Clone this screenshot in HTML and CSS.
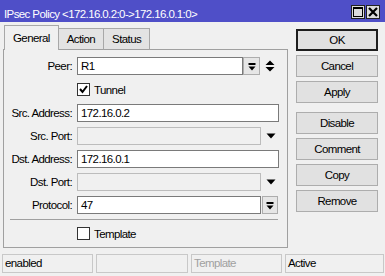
FILE: index.html
```html
<!DOCTYPE html>

<html lang="en">
  <head>
    <meta charset="utf-8">
    <meta name="viewport" content="width=device-width, initial-scale=1.0">

    <title>IPsec Policy</title>

    <link rel="stylesheet" href="styles.css">
  </head>
  <body>
    <div class="window">
      <div class="titlebar">
        <span class="title">IPsec Policy &lt;172.16.0.2:0-&gt;172.16.0.1:0&gt;</span>
        <div class="title-buttons">
          <span class="tb-btn">
            <svg width="12" height="12" viewBox="0 0 12 12"><rect x="1.5" y="1.5" width="9" height="9" fill="none" stroke="#000" stroke-width="1"/><rect x="1" y="1" width="10" height="2" fill="#000"/></svg>
          </span>
          <span class="tb-btn">
            <svg width="12" height="12" viewBox="0 0 12 12"><path d="M2 2 L10 10 M10 2 L2 10" stroke="#000" stroke-width="2.2"/></svg>
          </span>
        </div>
      </div>

      <div class="main">
        <div class="left">
          <div class="tabs">
            <span class="tab-edge"></span>
            <span class="tab active">General</span>
            <span class="tab">Action</span>
            <span class="tab">Status</span>
            <span class="tab-fill"></span>
          </div>

          <div class="panel">
            <div class="row">
              <span class="label">Peer:</span>
              <span class="field peer">R1</span>
              <span class="drop-btn">
                <svg width="16" height="17" viewBox="0 0 16 17"><rect x="4.5" y="5" width="7" height="2" fill="#000"/><path d="M4.5 8.5 H11.5 L8 12.5 Z" fill="#000"/></svg>
              </span>
              <svg class="updown" width="10" height="12" viewBox="0 0 10 12"><path d="M5 0.5 L9.5 5 H0.5 Z M0.5 7 H9.5 L5 11.5 Z" fill="#000"/></svg>
            </div>

            <div class="row check-row">
              <span class="checkbox">
                <svg width="11" height="11" viewBox="0 0 11 11"><path d="M2 5 L4.5 8 L9 2" fill="none" stroke="#000" stroke-width="2"/></svg>
              </span>
              <span class="check-label">Tunnel</span>
            </div>

            <div class="row">
              <span class="label">Src. Address:</span>
              <span class="field wide">172.16.0.2</span>
            </div>

            <div class="row">
              <span class="label">Src. Port:</span>
              <span class="field mid disabled"></span>
              <svg class="arrow" width="10" height="6" viewBox="0 0 10 6"><path d="M0.5 0.5 H9.5 L5 5.5 Z" fill="#000"/></svg>
            </div>

            <div class="row">
              <span class="label">Dst. Address:</span>
              <span class="field wide">172.16.0.1</span>
            </div>

            <div class="row">
              <span class="label">Dst. Port:</span>
              <span class="field mid disabled"></span>
              <svg class="arrow" width="10" height="6" viewBox="0 0 10 6"><path d="M0.5 0.5 H9.5 L5 5.5 Z" fill="#000"/></svg>
            </div>

            <div class="row">
              <span class="label">Protocol:</span>
              <span class="field mid">47</span>
              <span class="drop-btn proto">
                <svg width="16" height="17" viewBox="0 0 16 17"><rect x="4.5" y="5" width="7" height="2" fill="#000"/><path d="M4.5 8.5 H11.5 L8 12.5 Z" fill="#000"/></svg>
              </span>
            </div>

            <div class="separator"></div>

            <div class="row check-row last">
              <span class="checkbox"></span>
              <span class="check-label">Template</span>
            </div>
          </div>
        </div>

        <div class="buttons">
          <div class="btn default">OK</div>
          <div class="btn">Cancel</div>
          <div class="btn">Apply</div>
          <div class="btn spaced">Disable</div>
          <div class="btn">Comment</div>
          <div class="btn">Copy</div>
          <div class="btn">Remove</div>
        </div>
      </div>

      <div class="statusbar">
        <span class="status s1">enabled</span>
        <span class="status s2"></span>
        <span class="status s3 dim">Template</span>
        <span class="status s4">Active</span>
      </div>
    </div>
  </body>
</html>
```

FILE: styles.css
```css
* {
  box-sizing: border-box;
}

body {
  margin: 0;
  background-color: #f0f0f0;
  font-family: "Liberation Sans", Arial, sans-serif;
  font-size: 11.5px;
  letter-spacing: -0.6px;
  color: #000;
}

.window {
  width: 385px;
  height: 276px;
  display: flex;
  flex-direction: column;
}

/* title bar */
.titlebar {
  height: 22px;
  background-color: #4f4fc8;
  display: flex;
  justify-content: space-between;
  align-items: flex-start;
  padding: 0 5px 0 4px;
}
.title {
  color: #fff;
  margin-top: 7px;
  line-height: 14px;
  white-space: nowrap;
}
.title-buttons {
  display: flex;
  gap: 1px;
  margin-top: 5px;
}
.tb-btn {
  width: 14px;
  height: 14px;
  background-color: #dcdcdc;
  border: 1px solid #222;
  display: flex;
  align-items: center;
  justify-content: center;
}

/* main area */
.main {
  height: 232px;
  display: flex;
  padding: 3px 0 0 3px;
}
.left {
  width: 285px;
}

.tabs {
  display: flex;
  align-items: flex-end;
  height: 25px;
}
.tab-edge {
  width: 1px;
  height: 1px;
  border-bottom: 1px solid #a0a0a0;
}
.tab {
  height: 22px;
  padding: 0 8px;
  line-height: 21px;
  background-color: #e3e3e3;
  border-top: 1px solid #a8a8a8;
  border-right: 1px solid #a8a8a8;
  border-bottom: 1px solid #a0a0a0;
  white-space: nowrap;
}
.tab.active {
  height: 25px;
  line-height: 24px;
  background-color: #f0f0f0;
  border-left: 1px solid #a8a8a8;
  border-bottom: none;
}
.tab-fill {
  flex: 1;
  height: 1px;
  border-bottom: 1px solid #a0a0a0;
}

.panel {
  height: 198px;
  border: 1px solid #a0a0a0;
  border-top: none;
  padding-top: 7px;
}

.row {
  display: flex;
  align-items: center;
  height: 18px;
  margin-bottom: 5px;
}
.label {
  width: 68px;
  margin-right: 5px;
  text-align: right;
  white-space: nowrap;
}
.field {
  height: 18px;
  line-height: 16px;
  padding: 0 3px;
  background-color: #fff;
  border: 1px solid #7a7a7a;
  white-space: nowrap;
}
.field.peer {
  width: 166px;
}
.field.wide {
  width: 202px;
}
.field.mid {
  width: 184px;
}
.field.disabled {
  background-color: #f0f0f0;
  border-color: #bcbcbc;
}

.drop-btn {
  width: 17px;
  height: 18px;
  background-color: #e6e6e6;
  border: 1px solid #adadad;
  display: flex;
  align-items: center;
  justify-content: center;
}
.drop-btn svg {
  flex: none;
}
.drop-btn.proto {
  width: 16px;
  margin-left: 1px;
}
.updown {
  margin-left: 5px;
}
.arrow {
  margin-left: 5px;
}

.check-row {
  height: 19px;
  padding-left: 73px;
}
.checkbox {
  width: 13px;
  height: 13px;
  background-color: #fff;
  border: 1px solid #333;
  display: flex;
  align-items: center;
  justify-content: center;
}
.check-label {
  margin-left: 4px;
}

.separator {
  height: 1px;
  margin: 2px 9px 4px 6px;
  background-color: #a0a0a0;
}

/* right side buttons */
.buttons {
  margin-left: 8px;
  padding-top: 4px;
}
.btn {
  width: 82px;
  height: 22px;
  margin-bottom: 4px;
  line-height: 20px;
  text-align: center;
  background-color: #e1e1e1;
  border: 1px solid #adadad;
}
.btn.default {
  border-color: #1e1e1e;
  box-shadow: inset 0 0 0 1px #1e1e1e;
}
.btn.spaced {
  margin-top: 9px;
}

/* status bar */
.statusbar {
  height: 19px;
  display: flex;
  gap: 3px;
  padding-left: 2px;
}
.status {
  height: 19px;
  line-height: 17px;
  padding-left: 2px;
  border: 1px solid #c8c8c8;
  white-space: nowrap;
}
.s1 { width: 91px; }
.s2 { width: 92px; }
.s3 { width: 91px; }
.s4 { width: 99px; }
.dim {
  color: #a0a0a0;
}
```
